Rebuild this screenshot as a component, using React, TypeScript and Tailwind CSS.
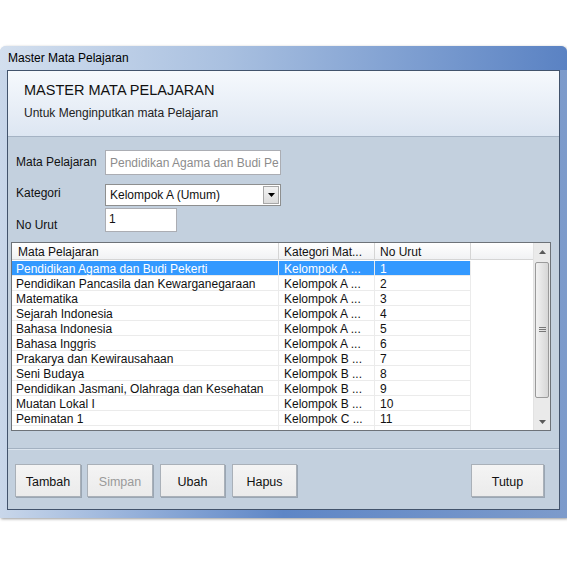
import React from "react";

const rows: [string, string, string][] = [
  ["Pendidikan Agama dan Budi Pekerti", "Kelompok A ...", "1"],
  ["Pendidikan Pancasila dan Kewarganegaraan", "Kelompok A ...", "2"],
  ["Matematika", "Kelompok A ...", "3"],
  ["Sejarah Indonesia", "Kelompok A ...", "4"],
  ["Bahasa Indonesia", "Kelompok A ...", "5"],
  ["Bahasa Inggris", "Kelompok A ...", "6"],
  ["Prakarya dan Kewirausahaan", "Kelompok B ...", "7"],
  ["Seni Budaya", "Kelompok B ...", "8"],
  ["Pendidikan Jasmani, Olahraga dan Kesehatan", "Kelompok B ...", "9"],
  ["Muatan Lokal I", "Kelompok B ...", "10"],
  ["Peminatan 1", "Kelompok C ...", "11"],
  ["", "", ""],
];

function Btn({ label, w, disabled }: { label: string; w: string; disabled?: boolean }) {
  return (
    <button
      className={`${w} h-[33px] pt-[3px] border border-[#a9b0b8] bg-gradient-to-b from-[#f4f4f4] to-[#ebebeb] shadow-[1px_1px_0_#9aa6b3] text-[12.5px] ${disabled ? "text-[#9a9a9a]" : "text-[#111]"}`}
    >
      {label}
    </button>
  );
}

export default function App() {
  return (
    <div className="w-[567px] h-[567px] bg-white overflow-hidden" style={{ fontFamily: "'Liberation Sans', Arial, sans-serif" }}>
      <div className="mt-[46px] w-[567px] h-[472px] flex flex-col rounded-t-[6px] bg-gradient-to-r from-[#c9d7ea] via-[#5e86c6] to-[#7d9bcb] shadow-[1px_1px_3px_rgba(0,0,0,0.4)]">
        {/* title bar */}
        <div className="h-[24px] flex items-center pl-[8px] text-[12px] text-black bg-gradient-to-r from-[#d3dfee] via-[#a9c0e0] via-40% to-[#5a82c3] rounded-t-[6px]">
          Master Mata Pelajaran
        </div>
        {/* client */}
        <div className="mx-[7px] flex-1 border border-[#42536c] bg-[#c3d0de] flex flex-col">
          <div className="h-[66px] border-b border-[#a5b3c4] bg-gradient-to-b from-[#f6f9fd] to-[#dde6f2] pl-[16px] pt-[10px]">
            <div className="text-[14.5px] leading-[18px] text-[#111]">MASTER MATA PELAJARAN</div>
            <div className="mt-[6px] text-[12px] leading-[16px] text-[#222]">Untuk Menginputkan mata Pelajaran</div>
          </div>

          {/* form */}
          <div className="pl-[8px] pt-[13px] text-[12px] text-[#111]">
            <div className="flex items-start h-[25px]">
              <div className="w-[89px] pt-[3px]">Mata Pelajaran</div>
              <div className="w-[176px] h-[25px] border border-[#abadb3] bg-white flex items-center pl-[4px] overflow-hidden whitespace-nowrap text-[#8c8c8c]">
                Pendidikan Agama dan Budi Pe
              </div>
            </div>
            <div className="flex items-start h-[22px] mt-[9px]">
              <div className="w-[89px] pt-[0px]">Kategori</div>
              <div className="w-[176px] h-[22px] border border-[#8e8f8f] bg-white flex items-center">
                <div className="flex-1 pl-[4px]">Kelompok A (Umum)</div>
                <div className="w-[16px] h-[18px] mr-[1px] border border-[#a7a7a7] bg-gradient-to-b from-[#f3f3f3] to-[#dcdcdc] flex items-center justify-center">
                  <svg width="7" height="4" viewBox="0 0 7 4"><path d="M0 0h7L3.5 4z" fill="#000" /></svg>
                </div>
              </div>
            </div>
            <div className="flex items-start h-[24px] mt-[2px]">
              <div className="w-[89px] pt-[8px]">No Urut</div>
              <div className="w-[72px] h-[24px] border border-[#abadb3] bg-white pl-[3px] pt-[1px]">1</div>
            </div>
          </div>

          {/* grid */}
          <div className="ml-[3px] mt-[10px] w-[540px] h-[189px] border border-[#6d7278] bg-white flex text-[12px] text-[#111] overflow-hidden">
            <div className="flex-1 flex flex-col">
              <div className="flex h-[17px] bg-gradient-to-b from-white to-[#f1f2f4] border-b border-[#d5d5d5] shrink-0">
                <div className="w-[267px] pl-[6px] border-r border-[#d5d5d5] leading-[18px]">Mata Pelajaran</div>
                <div className="w-[96px] pl-[5px] border-r border-[#d5d5d5] leading-[18px]">Kategori Mat...</div>
                <div className="w-[96px] pl-[5px] border-r border-[#d5d5d5] leading-[18px]">No Urut</div>
                <div className="flex-1" />
              </div>
              <div className="pt-[1px]">
                {rows.map(([a, b, c], i) => (
                  <div key={i} className="flex h-[15px] leading-[16px]">
                    <div className={`w-[267px] pl-[4px] border-r border-b border-[#ebebeb] whitespace-nowrap ${i === 0 ? "bg-[#3399ff] text-white" : ""}`}>{a}</div>
                    <div className={`w-[96px] pl-[5px] border-r border-b border-[#ebebeb] whitespace-nowrap ${i === 0 ? "bg-[#3399ff] text-white" : ""}`}>{b}</div>
                    <div className={`w-[96px] pl-[5px] border-r border-b border-[#ebebeb] ${i === 0 ? "bg-[#3399ff] text-white" : ""}`}>{c}</div>
                    <div className="flex-1" />
                  </div>
                ))}
              </div>
            </div>
            {/* scrollbar */}
            <div className="w-[17px] bg-[#eaeaea] flex flex-col border-l border-[#e2e2e2]">
              <div className="h-[17px] flex items-center justify-center">
                <svg width="7" height="4" viewBox="0 0 7 4"><path d="M0 4h7L3.5 0z" fill="#5a5a5a" /></svg>
              </div>
              <div className="mx-[1px] mt-[2px] h-[136px] rounded-[2px] border border-[#9a9a9a] bg-gradient-to-r from-[#f2f2f2] to-[#d6d6d6] flex items-center justify-center">
                <svg width="7" height="6" viewBox="0 0 7 6"><path d="M0 0.5h7M0 2.5h7M0 4.5h7" stroke="#777" strokeWidth="1" /></svg>
              </div>
              <div className="flex-1" />
              <div className="h-[17px] flex items-center justify-center">
                <svg width="7" height="4" viewBox="0 0 7 4"><path d="M0 0h7L3.5 4z" fill="#5a5a5a" /></svg>
              </div>
            </div>
          </div>

          {/* separator */}
          <div className="mt-[17px] border-t border-[#a3b1c1] border-b border-b-[#dbe4ee]" />

          {/* buttons */}
          <div className="flex items-center pl-[7px] pr-[15px] mt-[14px]">
            <Btn label="Tambah" w="w-[66px]" />
            <div className="w-[6px]" />
            <Btn label="Simpan" w="w-[66px]" disabled />
            <div className="w-[7px]" />
            <Btn label="Ubah" w="w-[65px]" />
            <div className="w-[7px]" />
            <Btn label="Hapus" w="w-[65px]" />
            <div className="flex-1" />
            <Btn label="Tutup" w="w-[73px]" />
          </div>
        </div>
        <div className="h-[8px]" />
      </div>
    </div>
  );
}
